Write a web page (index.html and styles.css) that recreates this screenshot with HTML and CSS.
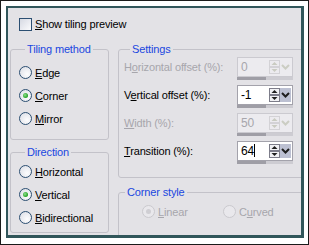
FILE: index.html
```html
<!DOCTYPE html>
<html lang="en">
<head>
  <meta charset="UTF-8">
  <title>Tiling options</title>
  <link rel="stylesheet" href="styles.css">
</head>
<body>
  <div class="frame">
    <div class="dialog">
      <div class="check-row">
        <span class="checkbox"></span>
        <span><u>S</u>how tiling preview</span>
      </div>

      <div class="columns">
        <div class="col-left">
          <fieldset class="group tiling">
            <legend>Tiling method</legend>
            <div class="radio-row"><span class="radio"></span><span><u>E</u>dge</span></div>
            <div class="radio-row"><span class="radio checked"></span><span><u>C</u>orner</span></div>
            <div class="radio-row"><span class="radio"></span><span><u>M</u>irror</span></div>
          </fieldset>

          <fieldset class="group direction">
            <legend>Direction</legend>
            <div class="radio-row"><span class="radio"></span><span><u>H</u>orizontal</span></div>
            <div class="radio-row"><span class="radio checked"></span><span><u>V</u>ertical</span></div>
            <div class="radio-row"><span class="radio"></span><span><u>B</u>idirectional</span></div>
          </fieldset>
        </div>

        <div class="col-right">
          <fieldset class="group settings">
            <legend>Settings</legend>

            <div class="field disabled">
              <span class="field-label">H<u>o</u>rizontal offset (%):</span>
              <div class="spin">
                <div class="spin-box">
                  <span class="spin-value">0</span>
                  <svg class="spin-arrows" width="11" height="14" viewBox="0 0 11 14">
                    <rect x="0.5" y="0.5" width="10" height="6"/>
                    <rect x="0.5" y="7.5" width="10" height="6"/>
                    <path d="M2.5 5h6L5.5 2z"/>
                    <path d="M2.5 9h6L5.5 12z"/>
                  </svg>
                  <svg class="spin-drop" width="11" height="14" viewBox="0 0 11 14">
                    <rect width="11" height="14"/>
                    <path d="M2 5l3.5 3.5L9 5"/>
                  </svg>
                </div>
                <div class="spin-bar"></div>
              </div>
            </div>

            <div class="field">
              <span class="field-label">V<u>e</u>rtical offset (%):</span>
              <div class="spin">
                <div class="spin-box">
                  <span class="spin-value">-1</span>
                  <svg class="spin-arrows" width="11" height="14" viewBox="0 0 11 14">
                    <rect x="0.5" y="0.5" width="10" height="6"/>
                    <rect x="0.5" y="7.5" width="10" height="6"/>
                    <path d="M2.5 5h6L5.5 2z"/>
                    <path d="M2.5 9h6L5.5 12z"/>
                  </svg>
                  <svg class="spin-drop" width="11" height="14" viewBox="0 0 11 14">
                    <rect width="11" height="14"/>
                    <path d="M2 5l3.5 3.5L9 5"/>
                  </svg>
                </div>
                <div class="spin-bar"></div>
              </div>
            </div>

            <div class="field disabled">
              <span class="field-label"><u>W</u>idth (%):</span>
              <div class="spin">
                <div class="spin-box">
                  <span class="spin-value">50</span>
                  <svg class="spin-arrows" width="11" height="14" viewBox="0 0 11 14">
                    <rect x="0.5" y="0.5" width="10" height="6"/>
                    <rect x="0.5" y="7.5" width="10" height="6"/>
                    <path d="M2.5 5h6L5.5 2z"/>
                    <path d="M2.5 9h6L5.5 12z"/>
                  </svg>
                  <svg class="spin-drop" width="11" height="14" viewBox="0 0 11 14">
                    <rect width="11" height="14"/>
                    <path d="M2 5l3.5 3.5L9 5"/>
                  </svg>
                </div>
                <div class="spin-bar"></div>
              </div>
            </div>

            <div class="field">
              <span class="field-label"><u>T</u>ransition (%):</span>
              <div class="spin">
                <div class="spin-box">
                  <span class="spin-value">64<span class="caret"></span></span>
                  <svg class="spin-arrows" width="11" height="14" viewBox="0 0 11 14">
                    <rect x="0.5" y="0.5" width="10" height="6"/>
                    <rect x="0.5" y="7.5" width="10" height="6"/>
                    <path d="M2.5 5h6L5.5 2z"/>
                    <path d="M2.5 9h6L5.5 12z"/>
                  </svg>
                  <svg class="spin-drop" width="11" height="14" viewBox="0 0 11 14">
                    <rect width="11" height="14"/>
                    <path d="M2 5l3.5 3.5L9 5"/>
                  </svg>
                </div>
                <div class="spin-bar"></div>
              </div>
            </div>
          </fieldset>

          <fieldset class="group corner-style">
            <legend>Corner style</legend>
            <div class="radio-line disabled">
              <div class="radio-row style-item"><span class="radio checked"></span><span><u>L</u>inear</span></div>
              <div class="radio-row style-item"><span class="radio"></span><span>C<u>u</u>rved</span></div>
            </div>
          </fieldset>
        </div>
      </div>
    </div>
  </div>
</body>
</html>
```

FILE: styles.css
```css
body {
  margin: 0;
  background: #fff;
  font-family: 'Liberation Sans', Arial, sans-serif;
  font-size: 11px;
  letter-spacing: -0.15px;
  color: #000;
}
.frame {
  width: 309px;
  height: 245px;
  box-sizing: border-box;
  border: 1px solid #1a1a1a;
  padding: 5px 4px 6px 5px;
  background: #fff;
}
.dialog {
  height: 232px;
  box-sizing: border-box;
  border: solid #31565a;
  border-width: 2px 3px 3px 2px;
  background: #e3e2e6;
  padding-top: 10px;
  overflow: hidden;
}

/* checkbox row */
.check-row {
  display: flex;
  align-items: center;
  gap: 3px;
  height: 13px;
  line-height: 13px;
  padding-left: 11px;
}
.checkbox {
  width: 13px;
  height: 13px;
  box-sizing: border-box;
  border: 1px solid #2c4f72;
  background: linear-gradient(135deg, #d6d9e2 0%, #fbfbfd 100%);
  flex: none;
}

.columns {
  display: flex;
  gap: 9px;
  margin-top: 12px;
  padding-left: 2px;
}
.col-left { width: 99px; flex: none; }
.col-right { width: 230px; flex: none; }

/* group boxes */
.group {
  margin: 0;
  padding: 0;
  border: 1px solid #c3c2c9;
  border-radius: 3px;
  min-width: 0;
}
.group legend {
  margin-left: 6px;
  padding: 0 2px;
  line-height: 13px;
  color: #1a47e0;
}
.tiling { padding: 5px 0 9px 8px; }
.direction { margin-top: 6px; padding: 1px 0 3px 8px; }
.settings { padding: 1px 0 8px 5px; }
.corner-style { margin-top: 8px; padding: 1px 0 30px 0; }

/* radios */
.radio-row {
  display: flex;
  align-items: center;
  gap: 3px;
  height: 23px;
}
.radio {
  width: 13px;
  height: 13px;
  box-sizing: border-box;
  border: 1px solid #2c4f72;
  border-radius: 50%;
  background: radial-gradient(circle at 65% 65%, #fdfdfe 0%, #e4e6ec 70%, #cfd3dd 100%);
  display: flex;
  align-items: center;
  justify-content: center;
  flex: none;
}
.radio.checked::after {
  content: '';
  width: 5px;
  height: 5px;
  border-radius: 50%;
  background: radial-gradient(circle at 40% 40%, #8ee08e 0%, #21a121 70%);
}
.radio-line { display: flex; padding-left: 23px; }
.style-item { width: 81px; }

/* disabled state */
.disabled { color: #a7a6ac; }
.disabled .radio {
  border-color: #cac9ce;
  background: #e9e8ec;
}
.disabled .radio.checked::after {
  background: #cfced3;
}

/* spin fields */
.field {
  display: flex;
  align-items: flex-start;
  height: 28px;
}
.field-label {
  width: 113px;
  line-height: 20px;
  flex: none;
}
.spin { width: 56px; flex: none; }
.spin-box {
  height: 20px;
  box-sizing: border-box;
  border: 1px solid #a3a2ab;
  background: #fff;
  display: flex;
  align-items: center;
}
.spin-value {
  flex: 1;
  padding-left: 3px;
  font-size: 12px;
  line-height: 18px;
}
.caret {
  display: inline-block;
  width: 1px;
  height: 13px;
  background: #000;
  vertical-align: -2px;
}
.spin-arrows { flex: none; }
.spin-arrows rect { fill: #f1f1f4; stroke: #7d7d8a; }
.spin-arrows path { fill: #1e1e1e; }
.spin-drop { flex: none; margin-right: 1px; }
.spin-drop rect { fill: #bcc0d2; }
.spin-drop path { fill: none; stroke: #1e1e1e; stroke-width: 2; }
.spin-bar {
  height: 3px;
  background: linear-gradient(90deg, #9f9ea6 0%, #9f9ea6 51%, #cdccd2 51%, #cdccd2 100%);
}

.disabled .spin-box {
  background: #ecebef;
  border-color: #cbcad0;
}
.disabled .spin-arrows rect { fill: none; stroke: #d3d2d6; }
.disabled .spin-arrows path { fill: #c9cbc1; }
.disabled .spin-drop rect { fill: none; }
.disabled .spin-drop path { stroke: #cbcdc3; }
```
